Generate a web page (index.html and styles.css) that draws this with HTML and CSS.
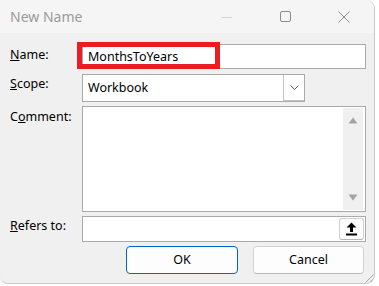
FILE: index.html
```html
<!DOCTYPE html>
<html>
<head>
<meta charset="utf-8">
<title>New Name</title>
<link rel="stylesheet" href="styles.css">
</head>
<body>
<div class="window">
  <div class="titlebar">
    <span class="title">New Name</span>
    <div class="caps">
      <div class="cap"><svg width="12" height="12" viewBox="0 0 12 12"><line x1="0.5" y1="6.5" x2="11" y2="6.5" stroke="#d4d4d4" stroke-width="1"/></svg></div>
      <div class="cap"><svg width="12" height="12" viewBox="0 0 12 12"><rect x="0.5" y="0.5" width="10" height="10" rx="1.5" fill="none" stroke="#8c8c8c" stroke-width="1"/></svg></div>
      <div class="cap"><svg width="13" height="12" viewBox="0 0 13 12"><path d="M0.5 0.5 L11.5 11.5 M11.5 0.5 L0.5 11.5" stroke="#8c8c8c" stroke-width="1" fill="none"/></svg></div>
    </div>
  </div>
  <div class="content">
    <div class="form">
      <div class="label row-name"><u>N</u>ame:</div>
      <div class="field row-name">
        <div class="input">MonthsToYears</div>
        <div class="highlight"></div>
      </div>

      <div class="label row-scope"><u>S</u>cope:</div>
      <div class="field row-scope">
        <div class="select">
          <span class="select-text">Workbook</span>
          <span class="select-btn"><svg width="9" height="6" viewBox="0 0 9 6"><path d="M0.5 0.5 L4.5 4.5 L8.5 0.5" fill="none" stroke="#606060" stroke-width="1"/></svg></span>
        </div>
      </div>

      <div class="label row-comment">C<u>o</u>mment:</div>
      <div class="field row-comment">
        <div class="textarea">
          <div class="scrollbar">
            <svg width="10" height="7" viewBox="0 0 10 7"><path d="M5 0.5 L9.5 6.5 H0.5 Z" fill="#a3a3a3"/></svg>
            <svg width="10" height="7" viewBox="0 0 10 7"><path d="M0.5 0.5 H9.5 L5 6.5 Z" fill="#a3a3a3"/></svg>
          </div>
        </div>
      </div>

      <div class="label row-refers"><u>R</u>efers to:</div>
      <div class="field row-refers">
        <div class="refers">
          <span class="pick-btn"><svg width="11" height="14" viewBox="0 0 11 14"><path d="M5.5 0.5 L10.5 5.5 H7 V10 H4 V5.5 H0.5 Z" fill="#000"/><rect x="0" y="11.5" width="11" height="2" fill="#000"/></svg></span>
        </div>
      </div>
    </div>
    <div class="buttons">
      <div class="btn btn-primary">OK</div>
      <div class="btn">Cancel</div>
    </div>
  </div>
  <svg class="grip" width="12" height="12" viewBox="0 0 12 12"><path d="M11.5 3.5 L3.5 11.5 M11.5 7.5 L7.5 11.5" stroke="#a8a8a8" stroke-width="1" fill="none"/></svg>
</div>
</body>
</html>
```

FILE: styles.css
```css
html, body {
  margin: 0;
  padding: 0;
  background: #ffffff;
}

body {
  font-family: "Noto Sans", "Open Sans", sans-serif;
  font-size: 12.5px;
  color: #000;
}

.window {
  position: relative;
  width: 374px;
  height: 283px;
  background: #f0f0f0;
  border-right: 1px solid #c9c9c9;
  border-bottom: 1px solid #c9c9c9;
  border-radius: 0 9px 9px 8px;
  overflow: hidden;
}

.titlebar {
  height: 33px;
  background: #f5f5f5;
  display: flex;
  align-items: center;
  justify-content: space-between;
}

.title {
  padding-left: 10px;
  font-size: 14px;
  color: #9b9b9b;
  line-height: 33px;
  margin-top: -1px;
}

.caps {
  display: flex;
  height: 33px;
}

.cap {
  width: 59px;
  display: flex;
  align-items: center;
  justify-content: center;
  padding-top: 1px;
  box-sizing: border-box;
}

.content {
  padding: 11px 8px 0 10px;
}

.form {
  display: grid;
  grid-template-columns: 72px 284px;
  align-items: start;
}

.label {
  line-height: 17px;
  padding-top: 2px;
}

.row-scope { margin-top: 5px; }
.row-comment { margin-top: 4px; }
.row-refers { margin-top: 4px; }

.label.row-scope { padding-top: 1px; }
.label.row-comment { padding-top: 2px; }
.label.row-refers { padding-top: 1px; }

.field {
  position: relative;
}

.input {
  height: 25px;
  box-sizing: border-box;
  border: 1px solid #aaaaaa;
  background: #fff;
  padding: 0 5px;
  line-height: 23px;
}

.highlight {
  position: absolute;
  left: -5px;
  top: -2px;
  width: 143px;
  height: 27px;
  box-sizing: border-box;
  border: 5px solid #ec1c24;
}

.select {
  width: 223px;
  height: 28px;
  box-sizing: border-box;
  border: 1px solid #aaaaaa;
  background: #fff;
  display: flex;
  align-items: stretch;
}

.select-text {
  flex: 1;
  padding-left: 5px;
  line-height: 26px;
}

.select-btn {
  width: 20px;
  border-left: 1px solid #c4c4c4;
  border-bottom: 1px solid #c4c4c4;
  display: flex;
  align-items: center;
  justify-content: center;
}

.textarea {
  height: 106px;
  box-sizing: border-box;
  border: 1px solid #aaaaaa;
  background: #fff;
  display: flex;
  justify-content: flex-end;
  padding: 1px 2px 1px 0;
}

.scrollbar {
  width: 20px;
  background: #f0f0f0;
  display: flex;
  flex-direction: column;
  justify-content: space-between;
  align-items: center;
  padding: 9px 0 9px;
  box-sizing: border-box;
}

.refers {
  height: 26px;
  box-sizing: border-box;
  border: 1px solid #aaaaaa;
  background: #fff;
  display: flex;
  justify-content: flex-end;
  align-items: center;
  padding-right: 1px;
}

.pick-btn {
  width: 25px;
  height: 22px;
  box-sizing: border-box;
  border: 1px solid #cfcfcf;
  border-bottom-color: #b5b5b5;
  border-radius: 3px;
  background: #fdfdfd;
  display: flex;
  align-items: center;
  justify-content: center;
}

.buttons {
  display: flex;
  justify-content: flex-end;
  gap: 15px;
  margin-top: 4px;
  padding-right: 2px;
}

.btn {
  width: 111px;
  height: 28px;
  box-sizing: border-box;
  border: 1px solid #d2d2d2;
  border-bottom-color: #bcbcbc;
  border-radius: 4px;
  background: #fdfdfd;
  text-align: center;
  line-height: 26px;
}

.btn-primary {
  width: 112px;
  border: 1px solid #0067c0;
}

.grip {
  position: absolute;
  right: 0;
  bottom: 0;
}
```
